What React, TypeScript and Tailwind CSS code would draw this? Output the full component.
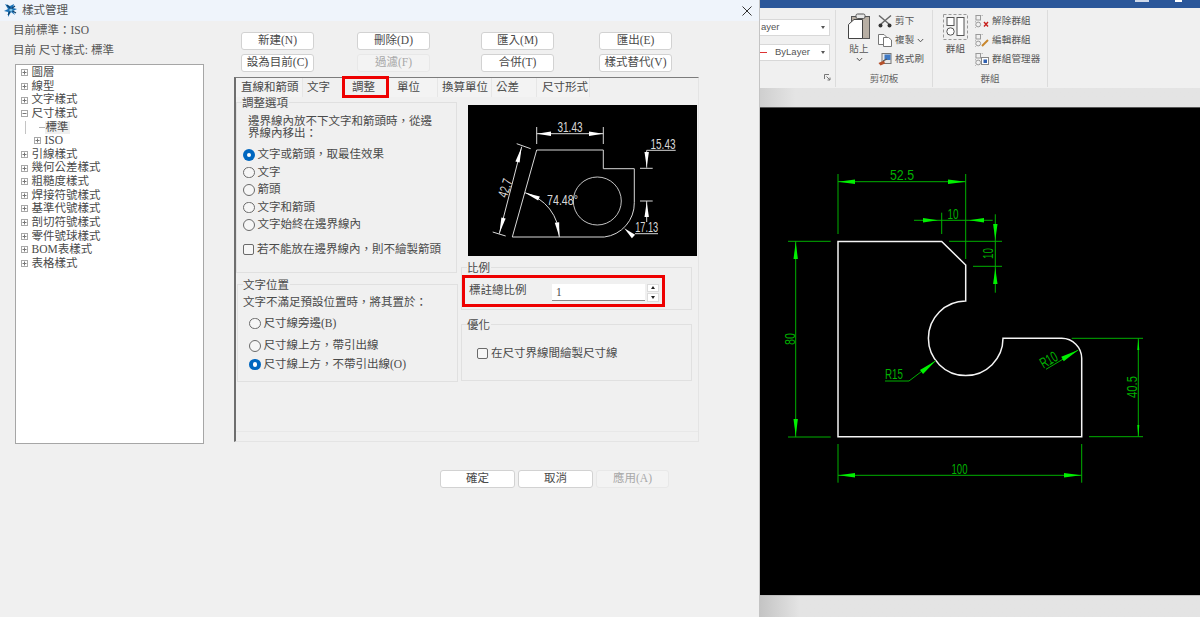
import React from "react";

const serif = "font-['Liberation_Serif','Noto_Sans_CJK_TC',serif]";
const sans = "font-['Liberation_Sans','Noto_Sans_CJK_TC',sans-serif]";

type P = [number, number];

function Arrow({ tip, tail, w = 4.4, fill }: { tip: P; tail: P; w?: number; fill: string }) {
  const dx = tail[0] - tip[0];
  const dy = tail[1] - tip[1];
  const l = Math.hypot(dx, dy) || 1;
  const nx = (-dy / l) * (w / 2);
  const ny = (dx / l) * (w / 2);
  const pts = `${tip[0]},${tip[1]} ${tail[0] + nx},${tail[1] + ny} ${tail[0] - nx},${tail[1] - ny}`;
  return <polygon points={pts} fill={fill} />;
}

function DimText({ x, y, t, w, rot = 0, fill, size = 15 }: { x: number; y: number; t: string; w: number; rot?: number; fill: string; size?: number }) {
  return (
    <text
      x={x}
      y={y}
      fill={fill}
      fontFamily="Liberation Sans, sans-serif"
      fontSize={size}
      textAnchor="middle"
      dominantBaseline="central"
      textLength={w}
      lengthAdjust="spacingAndGlyphs"
      transform={rot ? `rotate(${rot} ${x} ${y})` : undefined}
    >
      {t}
    </text>
  );
}

function Line({ d, c }: { d: string; c: string }) {
  return <path d={d} stroke={c} strokeWidth={1} fill="none" />;
}

function CadDrawing() {
  const g = "#00b000";
  const a = "#00f000";
  return (
    <svg viewBox="760 108 440 487" width={440} height={487} className="block">
      <path
        d="M838 241.5 H941.7 L965.7 265 V301 A37.3 37.3 0 1 0 1003 338.3 H1061.7 A20 20 0 0 1 1081.7 358.3 V436.7 H838 Z"
        fill="none"
        stroke="#f4f4f4"
        strokeWidth={1.5}
      />
      <Line c={g} d="M838 174 V234 M965.7 174 V259 M838 181.7 H965.7" />
      <Arrow fill={a} tip={[838, 181.7]} tail={[855, 181.7]} />
      <Arrow fill={a} tip={[965.7, 181.7]} tail={[948, 181.7]} />
      <DimText fill={g} x={902} y={174} t="52.5" w={24} />

      <Line c={g} d="M914 220.3 H992.7 M941.7 212.7 V234" />
      <Arrow fill={a} tip={[938, 220.3]} tail={[923, 220.3]} />
      <Arrow fill={a} tip={[969, 220.3]} tail={[984, 220.3]} />
      <DimText fill={g} x={953} y={213} t="10" w={11} />

      <Line c={g} d="M995.3 214.3 V292.7 M949 241.3 H1002 M973 266.3 H1002" />
      <Arrow fill={a} tip={[995.3, 240]} tail={[995.3, 224]} />
      <Arrow fill={a} tip={[995.3, 268]} tail={[995.3, 284]} />
      <DimText fill={g} x={987.5} y={253.5} t="10" w={11} rot={-90} />

      <Line c={g} d="M795.7 241 V437 M788 241.3 H830.7 M788 437 H830.7" />
      <Arrow fill={a} tip={[795.7, 242]} tail={[795.7, 259]} />
      <Arrow fill={a} tip={[795.7, 436]} tail={[795.7, 419]} />
      <DimText fill={g} x={789} y={339} t="80" w={12} rot={-90} />

      <Line c={g} d="M838 444 V482.7 M1081.7 444 V482.7 M838 475.3 H1081.7" />
      <Arrow fill={a} tip={[838.5, 475.3]} tail={[855, 475.3]} />
      <Arrow fill={a} tip={[1081, 475.3]} tail={[1064, 475.3]} />
      <DimText fill={g} x={959.5} y={468} t="100" w={16} />

      <Line c={g} d="M1138.3 338.3 V436.7 M1071.7 338.3 H1143 M1089 436.7 H1143" />
      <Arrow fill={a} tip={[1138.3, 338.6]} tail={[1138.3, 350]} w={2} />
      <Arrow fill={a} tip={[1138.3, 436.4]} tail={[1138.3, 425]} w={2} />
      <DimText fill={g} x={1131.5} y={387} t="40.5" w={22} rot={-90} />

      <Line c={g} d="M885 381 H909 L935.7 360.7" />
      <Arrow fill={a} tip={[935.7, 360.7]} tail={[921.5, 372]} w={5} />
      <DimText fill={g} x={894} y={373.5} t="R15" w={18} />

      <Line c={g} d="M1046 369.3 L1078.3 350" />
      <Arrow fill={a} tip={[1078.3, 350]} tail={[1062.5, 359]} w={5} />
      <DimText fill={g} x={1048.5} y={359.5} t="R10" w={18} rot={-30} />
    </svg>
  );
}

function PreviewDrawing() {
  const c = "#d8d8d8";
  const w = "#ffffff";
  return (
    <svg viewBox="468 104 229 151" width={229} height={151} className="block">
      <rect x={468} y={104} width={229} height={151} fill="#000" />
      <path d="M536.7 149 H603.3 V167.7 H634.3 V201.7 A34 34 0 0 1 604.3 236 H512.3 Z" fill="none" stroke={c} strokeWidth={1} />
      <circle cx={597.3} cy={200} r={24} fill="none" stroke={c} strokeWidth={0.9} />
      <Line c={c} d="M536.7 126 V143 M603.3 126 V143 M536.7 132.7 H603.3" />
      <Arrow fill={w} tip={[537, 132.7]} tail={[551, 132.7]} />
      <Arrow fill={w} tip={[603, 132.7]} tail={[589, 132.7]} />
      <DimText fill={c} x={570} y={126} t="31.43" w={25} size={14} />

      <Line c={c} d="M675.7 149.3 H646.7 V166.7 M640 167.3 H652.7" />
      <Arrow fill={w} tip={[646.7, 166]} tail={[646.7, 151]} />
      <DimText fill={c} x={663} y={142.5} t="15.43" w={25} size={14} />

      <Line c={c} d="M640 200 H652.7 M646.7 200 V221 M635 232.7 H658" />
      <Arrow fill={w} tip={[646.7, 201]} tail={[646.7, 216]} />
      <DimText fill={c} x={646.7} y={226} t="17.13" w={23} size={14} />
      <Arrow fill={w} tip={[624.3, 227.3]} tail={[633.5, 235.5]} w={4.8} />

      <Line c={c} d="M521.7 145.7 L499.3 232.7 M516.7 142.7 L530.7 147.7 M492.7 231 L505.7 235" />
      <Arrow fill={w} tip={[521.5, 146.5]} tail={[517.5, 161]} />
      <Arrow fill={w} tip={[499.5, 232]} tail={[503.5, 217]} />
      <DimText fill={c} x={505} y={187} t="42.7" w={19} rot={-72} size={14} />

      <path d="M525 191.7 A46 46 0 0 1 559.3 236" fill="none" stroke={c} strokeWidth={1} />
      <Arrow fill={w} tip={[525, 191.7]} tail={[539, 197.5]} w={4.4} />
      <Arrow fill={w} tip={[559.3, 236]} tail={[557, 221.5]} w={4.4} />
      <DimText fill={c} x={562.5} y={198.5} t="74.48°" w={31} size={14} />
    </svg>
  );
}

function Btn({ children, w = "w-[73px]", disabled = false, h = "h-[17.5px]" }: { children: React.ReactNode; w?: string; disabled?: boolean; h?: string }) {
  return (
    <div
      className={`${w} ${h} flex items-center justify-center rounded-[3px] text-[11.5px] leading-none ${
        disabled ? "bg-[#f3f3f3] border border-[#e8e8e8] text-[#a8a8a8]" : "bg-white border border-[#d2d2d2] text-[#4a4a4a]"
      }`}
    >
      {children}
    </div>
  );
}

function Radio({ checked = false }: { checked?: boolean }) {
  return checked ? (
    <span className="w-[11.5px] h-[11.5px] rounded-full bg-[#0067c0] flex items-center justify-center shrink-0">
      <span className="w-[4.5px] h-[4.5px] rounded-full bg-white" />
    </span>
  ) : (
    <span className="w-[11.5px] h-[11.5px] rounded-full border border-[#6a6a6a] bg-[#f6f6f6] shrink-0" />
  );
}

function Check() {
  return <span className="w-[11px] h-[11px] rounded-[2px] border border-[#6a6a6a] bg-[#f6f6f6] shrink-0" />;
}

function Box({ minus = false }: { minus?: boolean }) {
  return (
    <svg width={7} height={7} viewBox="0 0 7 7" className="shrink-0">
      <rect x={0.5} y={0.5} width={6} height={6} fill="#fff" stroke="#a8a8a8" />
      <path d={minus ? "M1.5 3.5 H5.5" : "M1.5 3.5 H5.5 M3.5 1.5 V5.5"} stroke="#777" />
    </svg>
  );
}

function TreeRow({ label, kind = "plus" }: { label: string; kind?: "plus" | "minus" | "leaf" | "sub" }) {
  if (kind === "leaf") {
    return (
      <div className="h-[13.62px] flex items-center pl-[9px]">
        <span className="w-px h-[13px] bg-[#c4c4c4]" />
        <span className="w-[13px]" />
        <span className="w-[6px] border-t border-[#b0b0b0]" />
        <span className="bg-[#efefef] px-px leading-[13px]">{label}</span>
      </div>
    );
  }
  if (kind === "sub") {
    return (
      <div className="h-[13.62px] flex items-center pl-[18px] gap-[4px]">
        <Box />
        <span>{label}</span>
      </div>
    );
  }
  return (
    <div className="h-[13.62px] flex items-center pl-[5px] gap-[4px]">
      <Box minus={kind === "minus"} />
      <span>{label}</span>
    </div>
  );
}

function Tree() {
  return (
    <div className="ml-[1.5px] mt-[4px] w-[189px] h-[380px] bg-white border border-[#a6a6a6] pt-px text-[11.5px] text-[#4a4a4a]">
      <TreeRow label="圖層" />
      <TreeRow label="線型" />
      <TreeRow label="文字樣式" />
      <TreeRow label="尺寸樣式" kind="minus" />
      <TreeRow label="標準" kind="leaf" />
      <TreeRow label="ISO" kind="sub" />
      <TreeRow label="引線樣式" />
      <TreeRow label="幾何公差樣式" />
      <TreeRow label="粗糙度樣式" />
      <TreeRow label="焊接符號樣式" />
      <TreeRow label="基準代號樣式" />
      <TreeRow label="剖切符號樣式" />
      <TreeRow label="零件號球樣式" />
      <TreeRow label="BOM表樣式" />
      <TreeRow label="表格樣式" />
    </div>
  );
}

function Tabs() {
  return (
    <div className="h-[19px] flex text-[11.5px] text-[#4a4a4a] leading-[19px] shrink-0">
      <div className="w-[67px] pl-[5px] border-r border-[#e6e6e6] bg-[#f3f3f3]">直線和箭頭</div>
      <div className="w-[38px] pl-[4px]">文字</div>
      <div className="w-[48px] pl-[11px] relative">
        調整
        <span className="absolute left-[1px] top-[-2px] w-[47px] h-[22px] border-[3px] border-[#ee0000]" />
      </div>
      <div className="w-[49px] pl-[8px] border-r border-[#e6e6e6] bg-[#f3f3f3]">單位</div>
      <div className="w-[54px] pl-[4px] border-r border-[#e6e6e6] bg-[#f3f3f3]">換算單位</div>
      <div className="w-[45px] pl-[4px] border-r border-[#e6e6e6] bg-[#f3f3f3]">公差</div>
      <div className="w-[53px] pl-[5px] border-r border-[#e6e6e6] bg-[#f3f3f3]">尺寸形式</div>
    </div>
  );
}

function Legend({ children }: { children: React.ReactNode }) {
  return <legend className="ml-[5px] leading-[12px] text-[11.5px] pr-px">{children}</legend>;
}

function Option({ label, checked = false, h = "h-[17.5px]", gap = "gap-[3px]" }: { label: string; checked?: boolean; h?: string; gap?: string }) {
  return (
    <div className={`flex items-center ${h} ${gap}`}>
      <Radio checked={checked} />
      <span>{label}</span>
    </div>
  );
}

function LeftGroups() {
  return (
    <div className="w-[222px] shrink-0 text-[11.5px] text-[#4a4a4a]">
      <fieldset className="w-[221px] h-[176px] border border-[#e0e0e0]">
        <Legend>調整選項</Legend>
        <div className="pl-[11px] pr-[6px] pt-[6px] leading-[12px]">
          邊界線內放不下文字和箭頭時，從邊
          <br />
          界線內移出：
        </div>
        <div className="pl-[6px] mt-[7.5px]">
          <Option label="文字或箭頭，取最佳效果" checked />
          <Option label="文字" />
          <Option label="箭頭" />
          <Option label="文字和箭頭" />
          <Option label="文字始終在邊界線內" />
          <div className="flex items-center gap-[3px] mt-[9px] h-[14px]">
            <Check />
            <span>若不能放在邊界線內，則不繪製箭頭</span>
          </div>
        </div>
      </fieldset>
      <fieldset className="ml-px w-[221px] h-[103px] mt-[6px] border border-[#e0e0e0]">
        <Legend>文字位置</Legend>
        <div className="pl-[5px] pt-[5px] leading-[12px]">文字不滿足預設位置時，將其置於：</div>
        <div className="pl-[11px] mt-[7.5px]">
          <Option label="尺寸線旁邊(B)" h="h-[17px]" />
          <div className="h-[5.5px]" />
          <Option label="尺寸線上方，帶引出線" h="h-[17px]" />
          <div className="h-[1.5px]" />
          <Option label="尺寸線上方，不帶引出線(O)" checked h="h-[17px]" />
        </div>
      </fieldset>
    </div>
  );
}

function RightGroups() {
  return (
    <div className="w-[235px] ml-[3px] text-[11.5px] text-[#4a4a4a]">
      <div className="ml-[7px] mt-[8px] w-[229px] h-[151px]">
        <PreviewDrawing />
      </div>
      <fieldset className="w-[231px] h-[48px] mt-[6px] border border-[#e0e0e0]">
        <Legend>比例</Legend>
        <div className="relative flex mt-[10px] pl-[7px]">
          <span className="w-[83px] leading-[12px]">標註總比例</span>
          <div className="w-[93px] h-[17px] bg-white border-b border-[#8a8a8a] pl-[4px] leading-[17px]">1</div>
          <div className="ml-[2px] w-[12px] h-[18px] flex flex-col gap-px">
            <div className="h-[8.5px] bg-white border border-[#dcdcdc] flex items-center justify-center">
              <span className="w-0 h-0 border-x-[2.5px] border-x-transparent border-b-[3px] border-b-[#222]" />
            </div>
            <div className="h-[8.5px] bg-white border border-[#dcdcdc] flex items-center justify-center">
              <span className="w-0 h-0 border-x-[2.5px] border-x-transparent border-t-[3px] border-t-[#222]" />
            </div>
          </div>
          <span className="absolute left-0 top-[-9px] w-[203px] h-[32px] border-[3px] border-[#ee0000]" />
        </div>
      </fieldset>
      <fieldset className="w-[231px] h-[62px] mt-[9px] border border-[#e0e0e0]">
        <Legend>優化</Legend>
        <div className="flex items-center gap-[3px] pl-[15px] mt-[16px] h-[14px]">
          <Check />
          <span>在尺寸界線間繪製尺寸線</span>
        </div>
      </fieldset>
    </div>
  );
}

function TitleLogo() {
  return (
    <svg width={14} height={15} viewBox="0 0 14 15" className="shrink-0">
      <path d="M1 1 L6 3 L10 1 L9 5 L13 6 L9 8 L11 12 L7 9 L4 14 L4 9 L0 8 L4 6 Z" fill="#1b72b8" />
      <path d="M3 2 L7 6 L11 3 M4 12 L7 7 L12 10" stroke="#0c3f6b" strokeWidth={1.2} fill="none" />
      <circle cx={7} cy={7} r={1.6} fill="#7fc4ea" />
    </svg>
  );
}

function Dialog() {
  return (
    <div className={`w-[760px] h-[617px] shrink-0 bg-[#f0f0f0] border-r border-[#c4c4c4] flex flex-col ${serif}`}>
      <div className="h-[21px] bg-[#eff4fb] flex items-center pl-[4px] shrink-0">
        <TitleLogo />
        <span className="ml-[4px] text-[11.5px] text-[#555]">樣式管理</span>
        <svg width={10} height={10} viewBox="0 0 10 10" className="ml-[674px]">
          <path d="M0.5 0.5 L9.5 9.5 M9.5 0.5 L0.5 9.5" stroke="#333" strokeWidth={1} />
        </svg>
      </div>
      <div className="flex flex-1">
        <div className="w-[234px] pl-[13px] shrink-0 text-[#555] text-[11.5px]">
          <div className="h-[19px] leading-[19px]">目前標準：ISO</div>
          <div className="h-[19px] mt-[1px] leading-[19px]">目前 尺寸樣式: 標準</div>
          <Tree />
        </div>
        <div className="w-[465px]">
          <div className="mt-[11px] ml-[7px] flex">
            <Btn>新建(N)</Btn>
            <div className="ml-[43px]"><Btn>刪除(D)</Btn></div>
            <div className="ml-[51px]"><Btn>匯入(M)</Btn></div>
            <div className="ml-[45px]"><Btn>匯出(E)</Btn></div>
          </div>
          <div className="mt-[4.5px] ml-[7px] flex">
            <Btn>設為目前(C)</Btn>
            <div className="ml-[43px]"><Btn disabled>過濾(F)</Btn></div>
            <div className="ml-[51px]"><Btn>合併(T)</Btn></div>
            <div className="ml-[45px]"><Btn>樣式替代(V)</Btn></div>
          </div>
          <div className="mt-[5px] h-[365px] flex flex-col border-t border-t-[#7c7c7c] border-l-2 border-l-[#6e6e6e] border-r border-r-[#e4e4e4] border-b border-b-[#e4e4e4]">
            <Tabs />
            <div className="flex flex-1">
              <LeftGroups />
              <RightGroups />
            </div>
            <div className="h-[10px] border-t border-[#e8e8e8] shrink-0" />
          </div>
          <div className="mt-[28px] ml-[206px] flex gap-[3px]">
            <Btn w="w-[75px]" h="h-[18px]">確定</Btn>
            <Btn w="w-[75px]" h="h-[18px]">取消</Btn>
            <Btn w="w-[73px]" h="h-[18px]" disabled>應用(A)</Btn>
          </div>
        </div>
      </div>
    </div>
  );
}

function DropArrow() {
  return <span className="w-0 h-0 border-x-[2.5px] border-x-transparent border-t-[3px] border-t-[#555]" />;
}

function Chevron() {
  return (
    <svg width={7} height={5} viewBox="0 0 7 5">
      <path d="M0.8 1 L3.5 3.8 L6.2 1" stroke="#555" fill="none" />
    </svg>
  );
}

function PasteIcon() {
  return (
    <svg width={23} height={27} viewBox="0 0 23 27" className="block">
      <rect x={3.5} y={3.5} width={18} height={22} fill="#b8afa4" stroke="#555" />
      <rect x={8} y={1} width={9} height={4.5} rx={1.5} fill="#e6e6e6" stroke="#555" />
      <path d="M0.5 11.5 L6 6.5 H14.5 V25.5 H0.5 Z" fill="#fff" stroke="#444" />
    </svg>
  );
}

function ScissorsIcon() {
  return (
    <svg width={14} height={13} viewBox="0 0 14 13">
      <path d="M1 0.5 L11 9 M13 0.5 L3 9" stroke="#666" strokeWidth={1.4} />
      <circle cx={2.5} cy={10.5} r={2} fill="#333" />
      <circle cx={11.5} cy={10.5} r={2} fill="#333" />
    </svg>
  );
}

function CopyIcon() {
  return (
    <svg width={14} height={13} viewBox="0 0 14 13">
      <path d="M0.5 0.5 H6 L8.5 3 V10.5 H0.5 Z" fill="#fff" stroke="#777" />
      <path d="M5.5 3.5 H10.5 L13.5 6 V12.5 H5.5 Z" fill="#fff" stroke="#777" />
    </svg>
  );
}

function PainterIcon() {
  return (
    <svg width={14} height={13} viewBox="0 0 14 13">
      <rect x={4} y={0.5} width={9} height={10} fill="#e8e8e8" stroke="#777" />
      <rect x={6.5} y={1.5} width={6} height={5.5} fill="#3f79c4" />
      <path d="M0.5 10 L6 7.5 L7 10.5 L2.5 12.5 Z" fill="#b5502a" />
      <path d="M5 8 L9 6" stroke="#555" strokeWidth={1.2} />
    </svg>
  );
}

function GroupBig() {
  return (
    <svg width={25} height={26} viewBox="0 0 25 26" className="block">
      <rect x={0.5} y={0.5} width={24} height={25} fill="none" stroke="#999" strokeDasharray="3 2" />
      <rect x={4} y={3.5} width={7} height={8} fill="#fff" stroke="#555" />
      <circle cx={7.5} cy={17.5} r={3.7} fill="#fff" stroke="#555" />
      <rect x={14} y={3.5} width={7} height={18} fill="#fff" stroke="#555" />
    </svg>
  );
}

function GroupSmall({ mark }: { mark: "x" | "pen" | "box" }) {
  return (
    <svg width={14} height={13} viewBox="0 0 14 13" className="shrink-0">
      <rect x={1} y={0.5} width={4.5} height={4.5} fill="none" stroke="#999" />
      <circle cx={3.2} cy={9.5} r={2.4} fill="none" stroke="#999" />
      <path d="M0.5 0 V13 M8 0.5 H5" stroke="#bbb" strokeDasharray="1.5 1.5" />
      {mark === "x" && <path d="M9 7 L13 11.5 M13 7 L9 11.5" stroke="#c8201c" strokeWidth={1.4} />}
      {mark === "pen" && <path d="M7 12 L13 6" stroke="#c8862c" strokeWidth={2} />}
      {mark === "box" && (
        <>
          <rect x={6.5} y={4.5} width={7} height={7} fill="#fff" stroke="#888" />
          <rect x={8.5} y={6.5} width={3.5} height={3.5} fill="#2f5fb0" />
        </>
      )}
    </svg>
  );
}

function SmallRow({ icon, label, extra }: { icon: React.ReactNode; label: string; extra?: React.ReactNode }) {
  return (
    <div className="h-[19.2px] flex items-center gap-[3px]">
      <span className="w-[14px] flex items-center justify-center shrink-0">{icon}</span>
      <span className="tracking-[0.2px]">{label}</span>
      {extra}
    </div>
  );
}

function GroupFrame({ w, label, children }: { w: string; label?: string; children: React.ReactNode }) {
  return (
    <div className={`${w} h-[77px] mt-[2px] border-r border-[#dcdcdc] flex flex-col shrink-0`}>
      <div className="h-[61px] flex">{children}</div>
      <div className="h-[16px] text-center leading-[15px] text-[#666]">{label}</div>
    </div>
  );
}

function Select({ children }: { children: React.ReactNode }) {
  return (
    <div className="w-[70px] h-[17px] bg-white border-y border-r border-[#d8d8d8] flex items-center justify-between pr-[4px]">
      {children}
    </div>
  );
}

function Workspace() {
  return (
    <div className={`flex-1 h-[617px] flex flex-col min-w-0 text-[9.5px] text-[#555] ${sans}`}>
      <div className="h-[8px] bg-[#2b579a] shrink-0 flex items-start justify-end pr-[18px] gap-[26px]">
        <span className="w-[14px] h-[2px] bg-[#cfd9ea]" />
        <span className="w-[7px] h-[2px] bg-white" />
      </div>
      <div className="h-[80px] bg-[#f0f0f0] flex shrink-0">
        <div className="w-[76px] h-[77px] mt-[2px] border-r border-[#dcdcdc] shrink-0">
          <div className="pt-[9px] flex flex-col gap-[8px]">
            <Select>
              <span className="pl-px text-[9.5px]">ayer</span>
              <DropArrow />
            </Select>
            <Select>
              <span className="flex items-center">
                <span className="w-[7px] border-t border-[#d33]" />
                <span className="ml-[8px]">ByLayer</span>
              </span>
              <DropArrow />
            </Select>
          </div>
          <div className="flex justify-end pr-[4px] mt-[13px]">
            <svg width={7} height={7} viewBox="0 0 7 7">
              <path d="M0.5 5 V0.5 H5 M2.5 2.5 L6 6 M6 3.5 V6 H3.5" stroke="#777" fill="none" />
            </svg>
          </div>
        </div>
        <GroupFrame w="w-[97px]" label="剪切板">
          <div className="ml-[11px] w-[24px] pt-[3px] flex flex-col items-center">
            <PasteIcon />
            <span className="mt-[3px] leading-[12px] tracking-[0.2px]">貼上</span>
            <span className="mt-[2px]"><Chevron /></span>
          </div>
          <div className="ml-[7px] pt-[1.5px]">
            <SmallRow icon={<ScissorsIcon />} label="剪下" />
            <SmallRow icon={<CopyIcon />} label="複製" extra={<Chevron />} />
            <SmallRow icon={<PainterIcon />} label="格式刷" />
          </div>
        </GroupFrame>
        <GroupFrame w="w-[115px]" label="群組">
          <div className="ml-[10px] w-[25px] pt-[4px] flex flex-col items-center">
            <GroupBig />
            <span className="mt-[3px] leading-[12px] tracking-[0.2px]">群組</span>
          </div>
          <div className="ml-[7px] pt-[1.5px]">
            <SmallRow icon={<GroupSmall mark="x" />} label="解除群組" />
            <SmallRow icon={<GroupSmall mark="pen" />} label="編輯群組" />
            <SmallRow icon={<GroupSmall mark="box" />} label="群組管理器" />
          </div>
        </GroupFrame>
      </div>
      <div className="h-[19px] shrink-0 bg-linear-to-r from-[#cfcfcf] to-[#e4e4e4] to-[8%]" />
      <div className="h-[488px] bg-black border-t border-[#555] shrink-0 overflow-hidden">
        <CadDrawing />
      </div>
      <div className="flex-1 border-t border-[#bdbdbd] bg-linear-to-r from-[#c4c4c4] to-[#e4e4e4] to-[9%]" />
    </div>
  );
}

export default function App() {
  return (
    <div className="w-[1200px] h-[617px] flex overflow-hidden">
      <Dialog />
      <Workspace />
    </div>
  );
}
